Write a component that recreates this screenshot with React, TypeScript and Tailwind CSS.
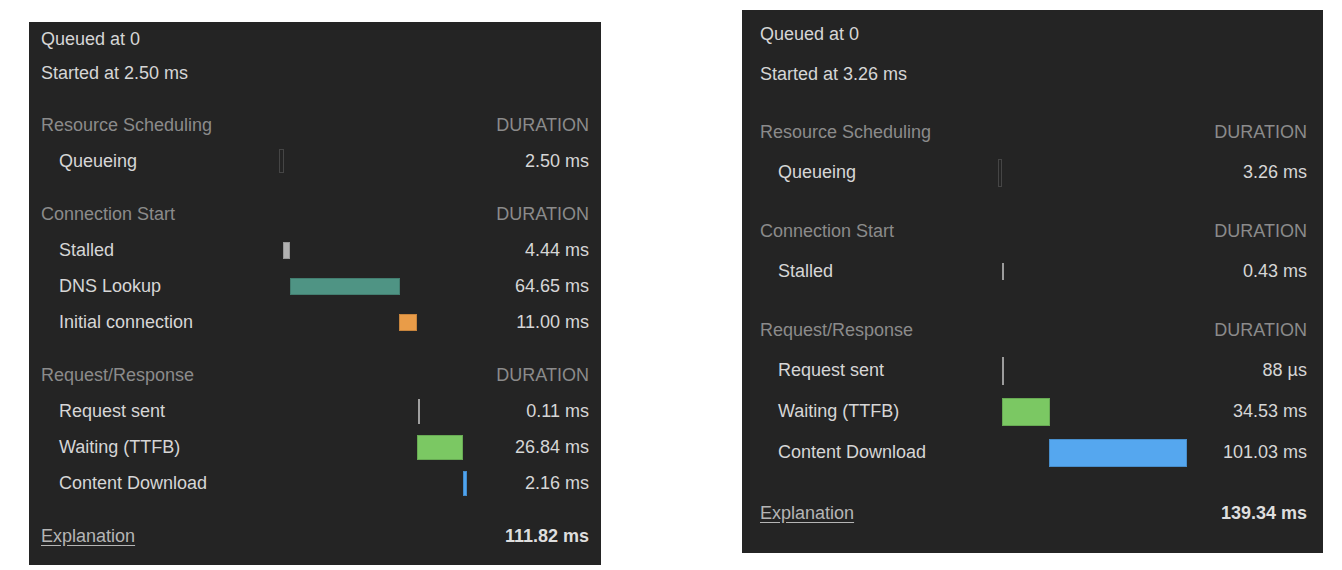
import { FC } from "react";

type Bar = {
  x: number;
  w: number;
  h: number;
  color?: string;
  kind?: "fill" | "outline";
};

type TimingRow = {
  label: string;
  value: string;
  bar?: Bar;
};

type Section = {
  title: string;
  rows: TimingRow[];
};

type Timing = {
  queued: string;
  started: string;
  sections: Section[];
  total: string;
};

const firstRequest: Timing = {
  queued: "Queued at 0",
  started: "Started at 2.50 ms",
  sections: [
    {
      title: "Resource Scheduling",
      rows: [
        { label: "Queueing", value: "2.50 ms", bar: { x: 0, w: 5, h: 24, kind: "outline" } },
      ],
    },
    {
      title: "Connection Start",
      rows: [
        { label: "Stalled", value: "4.44 ms", bar: { x: 4, w: 7, h: 17, color: "#b1b1b1" } },
        { label: "DNS Lookup", value: "64.65 ms", bar: { x: 11, w: 110, h: 17, color: "#4f9484" } },
        { label: "Initial connection", value: "11.00 ms", bar: { x: 120, w: 18, h: 17, color: "#e99c48" } },
      ],
    },
    {
      title: "Request/Response",
      rows: [
        { label: "Request sent", value: "0.11 ms", bar: { x: 139, w: 2, h: 25, color: "#bdbdbd" } },
        { label: "Waiting (TTFB)", value: "26.84 ms", bar: { x: 138, w: 46, h: 25, color: "#7bc863" } },
        { label: "Content Download", value: "2.16 ms", bar: { x: 184, w: 4, h: 25, color: "#4fa4ef" } },
      ],
    },
  ],
  total: "111.82 ms",
};

const secondRequest: Timing = {
  queued: "Queued at 0",
  started: "Started at 3.26 ms",
  sections: [
    {
      title: "Resource Scheduling",
      rows: [
        { label: "Queueing", value: "3.26 ms", bar: { x: 0, w: 4, h: 28, kind: "outline" } },
      ],
    },
    {
      title: "Connection Start",
      rows: [
        { label: "Stalled", value: "0.43 ms", bar: { x: 4, w: 2, h: 17, color: "#b8b8b8" } },
      ],
    },
    {
      title: "Request/Response",
      rows: [
        { label: "Request sent", value: "88 µs", bar: { x: 4, w: 2, h: 28, color: "#b8b8b8" } },
        { label: "Waiting (TTFB)", value: "34.53 ms", bar: { x: 4, w: 48, h: 28, color: "#7bc863" } },
        { label: "Content Download", value: "101.03 ms", bar: { x: 51, w: 138, h: 28, color: "#55a7ef" } },
      ],
    },
  ],
  total: "139.34 ms",
};

const TimingBar: FC<{ bar?: Bar }> = ({ bar }) => {
  if (!bar) return <div />;
  if (bar.kind === "outline") {
    return (
      <div className="flex items-center">
        <div
          className="border border-[#454545] box-border"
          style={{ marginLeft: bar.x, width: bar.w, height: bar.h }}
        />
      </div>
    );
  }
  return (
    <div className="flex items-center">
      <div
        className="box-border border border-black/15"
        style={{ marginLeft: bar.x, width: bar.w, height: bar.h, backgroundColor: bar.color }}
      />
    </div>
  );
};

interface PanelProps {
  data: Timing;
  wide?: boolean;
}

const TimingPanel: FC<PanelProps> = ({ data, wide }) => {
  const headH = wide ? "h-[40px]" : "h-[36px]";
  const rowH = wide ? "h-[41px]" : "h-[36px]";
  const gap = wide ? "mt-[18px]" : "mt-[17px]";

  return (
    <div
      className={
        wide
          ? "w-[581px] h-[543px] bg-[#242424] pt-[4px] pl-[18px] pr-[16px] shrink-0"
          : "w-[572px] h-[543px] bg-[#242424] pl-[12px] pr-[12px] shrink-0"
      }
    >
      <div className="font-['Liberation_Sans',Arial,sans-serif] text-[18px] text-[#d6d6d6]">
        <div className={`${wide ? "h-[40px]" : "h-[34px]"} flex items-center`}>{data.queued}</div>
        <div className={`${wide ? "h-[40px]" : "h-[34px]"} flex items-center`}>{data.started}</div>

        {data.sections.map((section) => (
          <div key={section.title} className={`${gap} grid grid-cols-[238px_1fr_auto]`}>
            <div className={`${headH} flex items-center text-[#8b8b8b]`}>{section.title}</div>
            <div />
            <div className={`${headH} flex items-center justify-end text-[#8b8b8b]`}>DURATION</div>

            {section.rows.map((row) => (
              <div key={row.label} className="contents">
                <div className={`${rowH} flex items-center pl-[18px]`}>{row.label}</div>
                <TimingBar bar={row.bar} />
                <div className={`${rowH} flex items-center justify-end`}>{row.value}</div>
              </div>
            ))}
          </div>
        ))}

        <div
          className={`${wide ? "mt-[20px] h-[40px]" : "mt-[17px] h-[36px]"} flex items-center justify-between`}
        >
          <span className="underline underline-offset-[3px] text-[#b5b5b5] cursor-pointer">Explanation</span>
          <span className="font-bold text-[#dedede]">{data.total}</span>
        </div>
      </div>
    </div>
  );
};

const App: FC = () => {
  return (
    <div className="w-[1342px] h-[570px] bg-white flex items-start overflow-hidden">
      <div className="ml-[29px] mt-[22px]">
        <TimingPanel data={firstRequest} />
      </div>
      <div className="ml-[141px] mt-[10px]">
        <TimingPanel data={secondRequest} wide />
      </div>
    </div>
  );
};

export default App;
